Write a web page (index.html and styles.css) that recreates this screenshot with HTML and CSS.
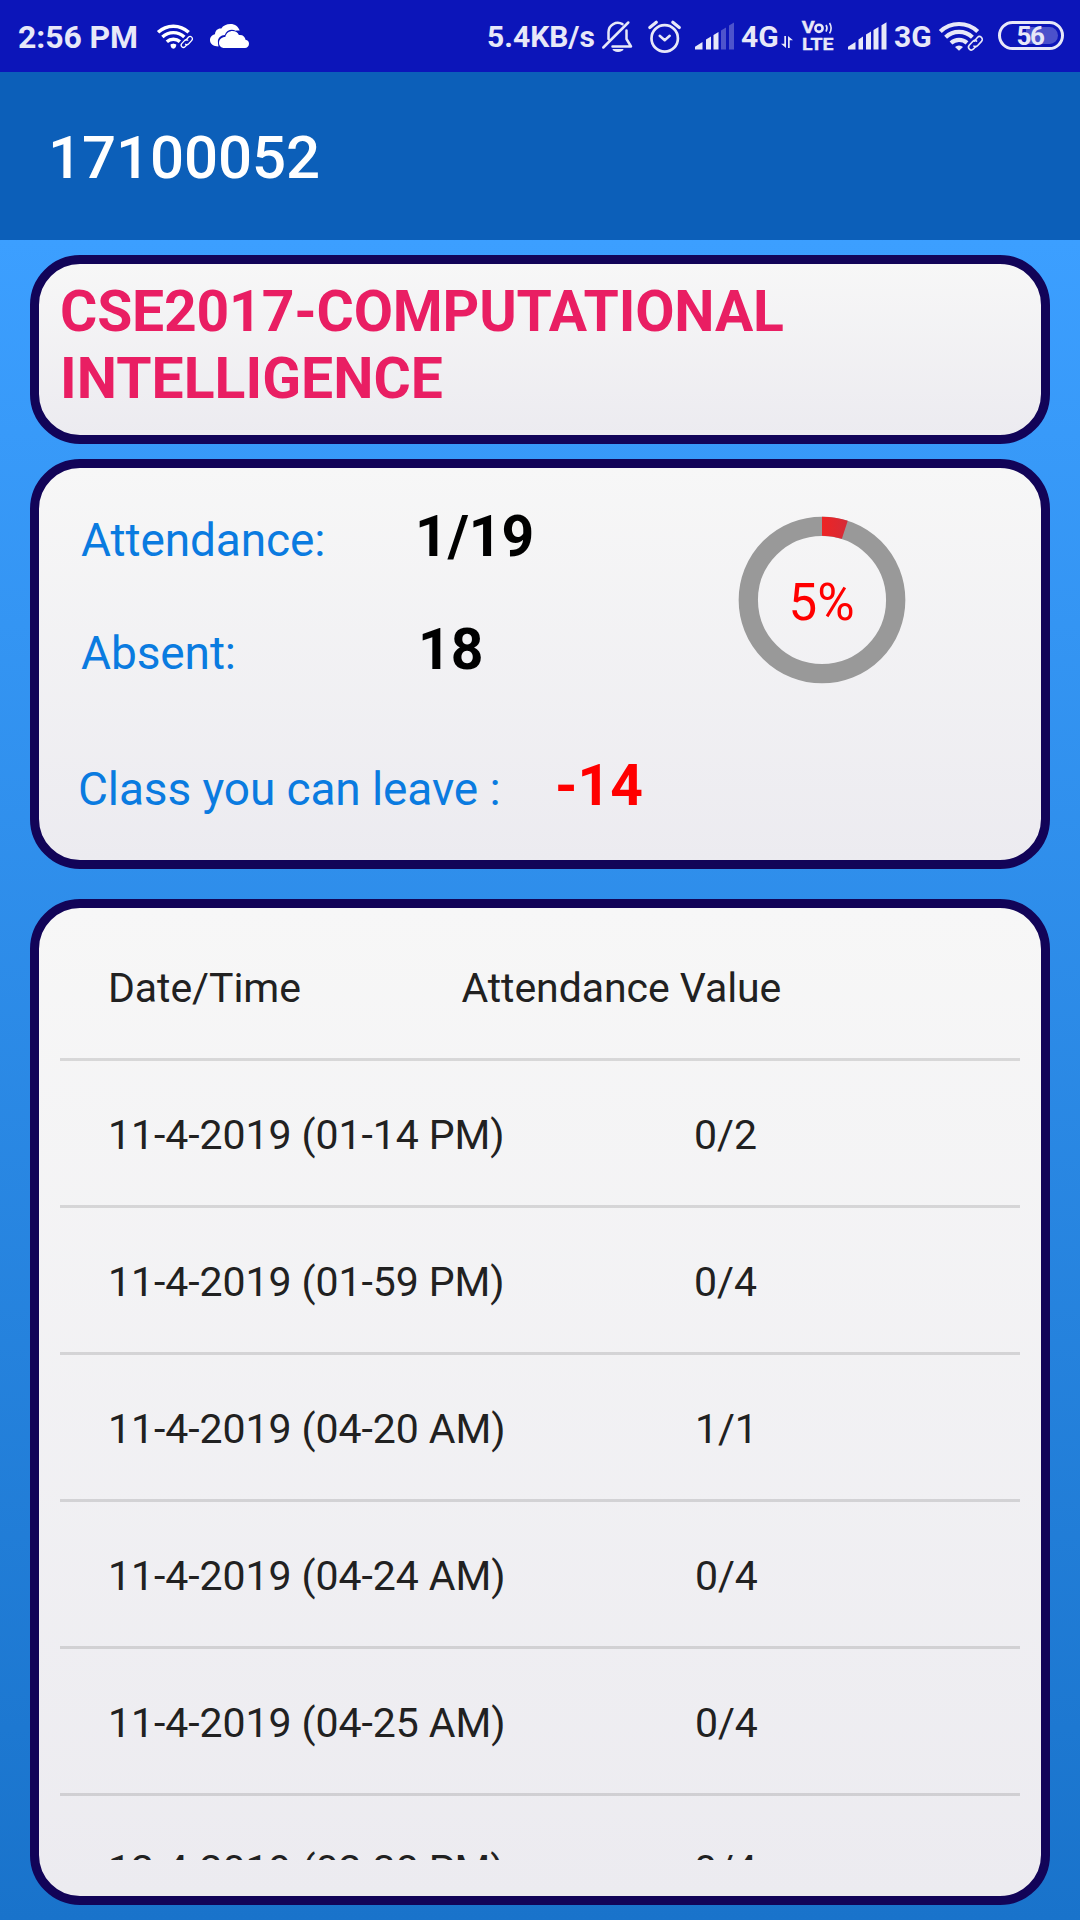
FILE: index.html
```html
<!DOCTYPE html>
<html lang="en">
<head>
<meta charset="utf-8">
<title>17100052</title>
<link rel="stylesheet" href="styles.css">
</head>
<body>
<div class="screen">
  <header class="status">
    <span class="clock">2:56 PM</span>
    <svg class="icon wifi-small" viewBox="0 0 44 30"><use href="#wifi-link"/><circle cx="20" cy="27.500" r="3"/></svg>
    <svg class="icon cloud" viewBox="0 0 39 24">
      <path d="M8.500 22.500C3.500 22.500 0 19.800 0 16.300c0-3.200 2.200-5.500 5-6C5.100 6.300 8 4 11.300 4.500 13 1.500 16.500 0 20.500 0c4.500 0 8 2.600 9.200 6.600-1.600-.4-3-.2-4 .2C21.500 4.500 16.300 6.400 14.800 11c-4 .3-6.900 2.700-6.900 6.600 0 2 .3 3.600.6 4.900z"/>
      <path d="M14.300 24c-3.200 0-5.300-2.200-5.300-5 0-3.600 2.700-6 6.300-6 .8-4 4-6 7.200-6 3 0 5.300 1.500 6.400 4 3.700-.6 6.300 1.600 6.600 4.800 2.200.3 3.500 2 3.500 4 0 2.500-1.800 4.200-4 4.200z"/>
    </svg>
    <span class="speed">5.4KB/s</span>
    <svg class="icon bell" viewBox="0 0 31 32">
      <g fill="none" stroke="currentColor" stroke-width="2.500" stroke-linecap="round" stroke-linejoin="round">
        <path d="M6.500 18V11a9.300 9.300 0 0 1 14-7.800M24.500 9.500V18l4.500 7.500H10.500M1.300 26.500 26.300 1.500"/>
      </g>
      <path d="M10.500 28h11a5.500 3 0 0 1-11 0z"/>
    </svg>
    <svg class="icon alarm" viewBox="0 0 33 33">
      <g fill="none" stroke="currentColor" stroke-linecap="round" stroke-linejoin="round">
        <circle cx="16.700" cy="18.400" r="13.200" stroke-width="2.700"/>
        <path d="M11.700 15.800l5 4.400 5-4.400" stroke-width="2.500"/>
        <path d="M1.800 7.500 8.300 2.300M31.300 7.500l-6.500-5.200" stroke-width="3.200"/>
      </g>
    </svg>
    <svg class="icon signal" viewBox="0 0 39 28">
      <path d="M0 27.500v-2.800L7.500 20v7.500zM11 17.500l5-3v13h-5zM18.500 13l5-3v17.500h-5z"/>
      <path class="dim" d="M26 8.500l5-3v22h-5zM34 3.500l5-3v27h-5z"/>
    </svg>
    <span class="net net-4g">4G</span>
    <svg class="icon arrows" viewBox="0 0 12 12">
      <path d="M3.300 0H5v12L0 7.700h3.300zM8.700 12H7V0l5 4.300H8.700z"/>
    </svg>
    <svg class="icon volte" viewBox="0 0 32 31">
      <text x="-0.300" y="12.800" class="vo" textLength="13" lengthAdjust="spacingAndGlyphs">V</text>
      <circle cx="17" cy="8.300" r="3.600" fill="none" stroke="currentColor" stroke-width="2.600"/>
      <path d="M24 5q2 3.300 0 6.600M27.500 3q3.300 5.200 0 10.400" fill="none" stroke="currentColor" stroke-width="1.600"/>
      <text x="0" y="29.700" class="lte" textLength="31.500" lengthAdjust="spacingAndGlyphs">LTE</text>
    </svg>
    <svg class="icon signal2" viewBox="0 0 39 28">
      <path d="M0 27.500v-2.800L7.500 20v7.500zM10.500 17.500l4.500-3v13h-4.500zM18 12.500l5-3v18h-5zM25.500 8l5-3v22.500h-5zM33.500 3.200l5-3v27.300h-5z"/>
    </svg>
    <span class="net net-3g">3G</span>
    <svg class="icon wifi" viewBox="0 0 44 30">
      <g id="wifi-link">
        <g fill="none" stroke="currentColor" stroke-width="4.200">
          <path d="M1.300 10.500a27 27 0 0 1 37.400 0"/>
          <path d="M6.600 16.200a19.500 19.500 0 0 1 26.800 0"/>
          <path d="M12 22a12 12 0 0 1 16-.1"/>
        </g>
        <path d="M20 29.800l-4-3.700a5.600 5.600 0 0 1 8 0z"/>
        <g fill="none" stroke="currentColor" stroke-width="1.600" stroke-linecap="round">
          <path d="M35.200 20.200l3.200-3.700a2.800 2.800 0 0 1 4.100 3.900l-4 4.400a2.800 2.800 0 0 1-3.600.3"/>
          <path d="M37 25.200l-2.800 3a2.800 2.800 0 0 1-4-3.900l3.700-4a2.800 2.800 0 0 1 3.700-.2"/>
        </g>
      </g>
    </svg>
    <span class="battery">56</span>
  </header>

  <div class="appbar"><h1>17100052</h1></div>

  <main class="content">
    <section class="card course">CSE2017-COMPUTATIONAL <span class="wide">INTELLIGENCE</span></section>

    <section class="card summary">
      <div class="stats">
        <div class="stat present"><span class="label">Attendance:</span><span class="value">1/19</span></div>
        <div class="stat absent"><span class="label">Absent:</span><span class="value">18</span></div>
        <div class="stat leave"><span class="label">Class you can leave :</span><span class="value">-14</span></div>
      </div>
      <div class="gauge">
        <svg viewBox="0 0 168 168">
          <defs>
            <linearGradient id="arc" x1="0" x2="1"><stop offset="0" stop-color="#ee2424"/><stop offset="1" stop-color="#d42b38"/></linearGradient>
          </defs>
          <circle cx="84" cy="84" r="73.700" fill="none" stroke="#999" stroke-width="19.300"/>
          <path d="M84 .7A83.300 83.300 0 0 1 109.740 4.780L103.870 22.830A64.300 64.300 0 0 0 84 19.700z" fill="url(#arc)"/>
        </svg>
        <span class="percent">5%</span>
      </div>
    </section>

    <section class="card log">
      <div class="rows">
        <div class="row head"><span>Date/Time</span><span>Attendance Value</span></div>
        <div class="row"><span>11-4-2019 (01-14 PM)</span><span>0/2</span></div>
        <div class="row"><span>11-4-2019 (01-59 PM)</span><span>0/4</span></div>
        <div class="row"><span>11-4-2019 (04-20 AM)</span><span>1/1</span></div>
        <div class="row"><span>11-4-2019 (04-24 AM)</span><span>0/4</span></div>
        <div class="row"><span>11-4-2019 (04-25 AM)</span><span>0/4</span></div>
        <div class="row"><span>12-4-2019 (02-38 PM)</span><span>0/4</span></div>
      </div>
    </section>
  </main>
</div>
</body>
</html>
```
FILE: styles.css
```css
* { box-sizing: border-box; }

body {
  margin: 0;
  font-family: Roboto, "Noto Sans", sans-serif;
}

.screen {
  width: 1080px;
  height: 1920px;
  overflow: hidden;
  display: flex;
  flex-direction: column;
}

/* Status bar */
.status {
  height: 72px;
  flex: none;
  display: flex;
  align-items: flex-start;
  padding-left: 18px;
  background: #0c15b9;
  color: #e7e8f8;
  white-space: nowrap;
}
.status span { flex: none; line-height: 36px; margin-top: 19px; }
.icon { flex: none; display: block; fill: currentColor; overflow: visible; }
.status .clock { width: 139px; font-size: 32px; font-weight: 700; letter-spacing: -0.1px; }
.wifi-small { width: 36px; height: 26px; margin-top: 23px; color: #fff; }
.cloud { width: 39px; height: 24px; margin: 23.500px 0 0 17px; color: #fff; }
.status .speed { width: 114px; font-size: 30px; margin-left: 238px; font-weight: 700; }
.bell { width: 31px; height: 32px; margin-top: 21px; margin-left: 1px; }
.alarm { width: 33px; height: 33px; margin: 20px 0 0 15px; }
.signal { width: 39px; height: 28px; margin: 21.500px 0 0 14px; }
.dim { opacity: .3; }
.status .net { font-size: 30px; font-weight: 700; }
.status .net-4g { width: 40px; margin-left: 7px; }
.arrows { width: 12px; height: 12px; margin-top: 36px; }
.volte { width: 32px; height: 31px; margin: 20px 0 0 9px; }
.vo, .lte { font-weight: 700; }
.vo { font-size: 16px; stroke: currentColor; stroke-width: .3px; }
.lte { font-size: 17px; stroke: currentColor; stroke-width: .3px; }
.signal2 { width: 39px; height: 28px; margin: 21.500px 0 0 14px; }
.status .net-3g { width: 45px; margin-left: 7px; }
.wifi { width: 44px; height: 30px; margin-top: 20.500px; }
.status .battery {
  width: 66px;
  height: 29px;
  margin: 21px 0 0 15px;
  padding: 3px;
  border: 3px solid currentColor;
  border-radius: 15px;
  background: linear-gradient(to right, transparent 22px, #4b51cb 22px) content-box;
  font-size: 26px;
  font-weight: 700;
  letter-spacing: -1.500px;
  text-indent: -2px;
  line-height: 19px;
  text-align: center;
}

/* App bar */
.appbar {
  height: 168px;
  flex: none;
  display: flex;
  align-items: center;
  padding: 3px 0 0 48px;
  background: #0c5fb9;
  color: #fff;
}
.appbar h1 { margin: 0; font-size: 60px; font-weight: 500; letter-spacing: -0.1px; }

/* Cards */
.content {
  flex: 1;
  display: flex;
  flex-direction: column;
  padding: 15px 30px;
  background: linear-gradient(#3c9fff, #1973cb);
}
.card {
  flex: none;
  border: 9px solid #120458;
  border-radius: 50px;
  background: linear-gradient(#f7f7f7, #ecebf0);
}
.course {
  height: 189px;
  padding: 14px 21px 0;
  color: #e91e63;
  font-size: 57px;
  font-weight: 700;
  line-height: 67px;
  letter-spacing: -0.15px;
}
.wide { letter-spacing: 0.05px; }
.summary {
  height: 410px;
  margin-top: 15px;
  display: flex;
  justify-content: space-between;
}
.stats { padding: 35px 0 0 42px; white-space: nowrap; }
.stat { display: flex; align-items: baseline; height: 113px; }
.label { width: 337px; font-size: 46px; letter-spacing: -0.1px; color: #0a7be0; }
.present .label { width: 334px; }
.value { font-size: 57px; font-weight: 700; color: #000; }
.absent { height: 136px; }
.leave { margin-left: -3px; }
.leave .label { width: 477px; }
.leave .value { color: #f00; }
.gauge {
  width: 168px;
  height: 168px;
  margin: 48px 135.500px 0 0;
  display: grid;
  place-items: center;
}
.gauge svg, .percent { grid-area: 1 / 1; }
.gauge svg { width: 168px; height: 168px; }
.percent { font-size: 51px; color: #f00; line-height: 60px; padding-top: 6px; }

/* Attendance log */
.log { height: 1006px; margin-top: 30px; padding: 6px 21px 36px; }
.rows { height: 946px; overflow: hidden; }
.row {
  height: 147px;
  border-bottom: 3px solid rgba(0, 0, 0, .12);
  padding: 4px 0 0 48px;
  display: flex;
  align-items: center;
  gap: 189.500px;
  font-size: 41px;
  letter-spacing: -0.06px;
  color: #212121;
  white-space: nowrap;
}
.head { gap: 160.500px; }
```
